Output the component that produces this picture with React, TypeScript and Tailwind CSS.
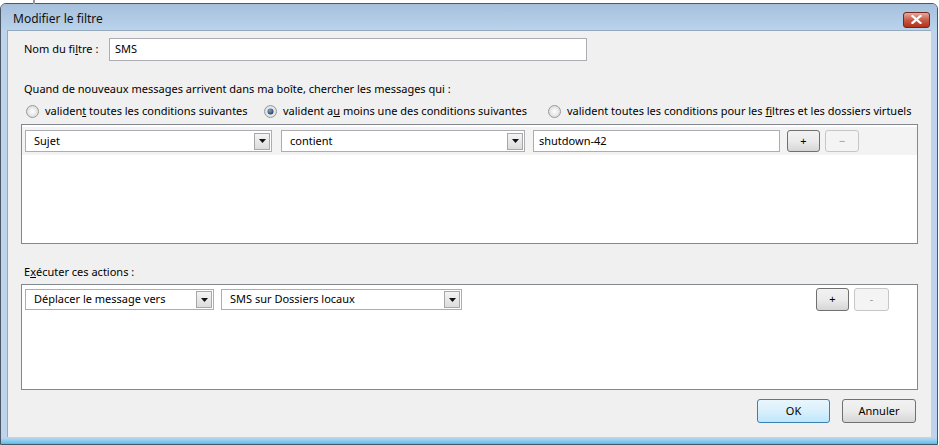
import type { ReactNode } from 'react'

function Combo({ value, className }: { value: string; className: string }) {
  return (
    <div
      className={`${className} flex items-center bg-white border border-[#abadb3] pl-[8px] pr-[1px]`}
    >
      <span className="flex-1 truncate">{value}</span>
      <span className="w-[16px] h-[17px] border border-[#a7a7a7] bg-gradient-to-b from-[#f4f4f4] to-[#dcdcdc] flex items-center justify-center">
        <svg width="7" height="4" viewBox="0 0 7 4">
          <path d="M0 0h7L3.5 4z" fill="#111" />
        </svg>
      </span>
    </div>
  )
}

function SmallBtn({ label, disabled, className }: { label: string; disabled?: boolean; className: string }) {
  return (
    <div
      className={
        disabled
          ? `${className} flex items-center justify-center rounded-[3px] border border-[#c6c6c6] bg-[#f4f4f4] text-[#9a9a9a]`
          : `${className} flex items-center justify-center rounded-[3px] border border-[#707070] bg-gradient-to-b from-[#f2f2f2] via-[#ebebeb] to-[#d6d6d6] text-black`
      }
    >
      {label}
    </div>
  )
}

function Radio({ checked, children, className }: { checked?: boolean; children: ReactNode; className?: string }) {
  return (
    <div className={`${className ?? ''} shrink-0 flex items-center gap-[6px] whitespace-nowrap`}>
      <svg width="13" height="13" viewBox="0 0 13 13" className="shrink-0">
        <defs>
          <radialGradient id="rb" cx="0.5" cy="0.5" r="0.6">
            <stop offset="0" stopColor="#ffffff" />
            <stop offset="1" stopColor="#d4d4d4" />
          </radialGradient>
          <radialGradient id="rd" cx="0.4" cy="0.35" r="0.7">
            <stop offset="0" stopColor="#7fa4c8" />
            <stop offset="1" stopColor="#1d3c5e" />
          </radialGradient>
        </defs>
        <circle cx="6.5" cy="6.5" r="6" fill="url(#rb)" stroke="#9a9a9a" />
        {checked ? <circle cx="6.5" cy="6.5" r="3" fill="url(#rd)" /> : null}
      </svg>
      <span>{children}</span>
    </div>
  )
}

export default function App() {
  return (
    <div className="w-[939px] h-[445px] bg-white overflow-hidden relative font-['Noto_Sans',sans-serif] text-[11px] text-black">
      {/* bit of the window behind */}
      <div className="absolute left-[33px] top-0 w-[2px] h-[4px] bg-[#9a9a9a]" />
      <div className="mt-[3px] w-[938px] h-[442px] flex flex-col rounded-t-[6px] border border-[#4a5866] bg-[#bdd4ec]">
        {/* title bar */}
        <div className="h-[26px] flex items-center justify-between pl-[12px] pr-[7px] rounded-t-[5px] bg-gradient-to-b from-[#a6c0dc] to-[#bad3ec]">
          <span className="mt-[3px] text-[12px] text-[#111]">Modifier le filtre</span>
          <div className="mt-[5px] w-[27px] h-[16px] rounded-[3px] border border-[#6b2a22] bg-gradient-to-b from-[#e9a99c] via-[#c75a47] to-[#b3301b] flex items-center justify-center">
            <svg width="11" height="9" viewBox="0 0 11 9">
              <path d="M1.5 1l8 7M9.5 1l-8 7" stroke="#fff" strokeWidth="2.2" strokeLinecap="square" />
            </svg>
          </div>
        </div>

        <div className="flex-1 flex px-[6px]">
          <div className="flex-1 h-[407px] bg-[#f0f0f0] border-l border-t border-[#97aabd] flex flex-col px-[13px]">
            {/* name row */}
            <div className="mt-[7px] flex items-center">
              <span className="ml-[3px] w-[85px]">
                Nom du fi<span className="underline">l</span>tre :
              </span>
              <div className="w-[478px] h-[23px] bg-white border border-[#abadb3] flex items-center pl-[5px]">SMS</div>
            </div>

            <div className="mt-[20px] ml-[3px] h-[16px] flex items-center">
              Quand de nouveaux messages arrivent dans ma boîte, chercher les messages qui :
            </div>
            <div className="mt-[6px] ml-[5px] h-[16px] flex items-center">
              <Radio className="w-[238px]">
                validen<span className="underline">t</span> toutes les conditions suivantes
              </Radio>
              <Radio checked className="w-[284px]">
                valident a<span className="underline">u</span> moins une des conditions suivantes
              </Radio>
              <Radio>
                valident toutes les conditions pour les <span className="underline">f</span>iltres et les dossiers virtuels
              </Radio>
            </div>

            {/* conditions */}
            <div className="mt-[5px] h-[120px] bg-white border border-[#828790]">
              <div className="mt-[2px] h-[28px] bg-[#f3f3f3] flex items-center pl-[3px]">
                <Combo value="Sujet" className="w-[247px] h-[22px]" />
                <Combo value="contient" className="ml-[9px] w-[244px] h-[22px]" />
                <div className="ml-[8px] w-[247px] h-[22px] bg-white border border-[#abadb3] flex items-center pl-[5px]">
                  shutdown-42
                </div>
                <SmallBtn label="+" className="ml-[7px] w-[33px] h-[22px]" />
                <SmallBtn label="−" disabled className="ml-[5px] w-[34px] h-[22px]" />
              </div>
            </div>

            <div className="mt-[20px] ml-[3px] h-[16px] flex items-center">
              E<span className="underline">x</span>écuter ces actions :
            </div>

            {/* actions */}
            <div className="mt-[4px] h-[106px] bg-white border border-[#828790]">
              <div className="mt-[3px] flex items-center pl-[3px] pr-[28px]">
                <Combo value="Déplacer le message vers" className="w-[189px] h-[21px]" />
                <Combo value="SMS sur Dossiers locaux" className="ml-[7px] w-[241px] h-[21px]" />
                <SmallBtn label="+" className="ml-auto w-[33px] h-[23px]" />
                <SmallBtn label="-" disabled className="ml-[5px] w-[35px] h-[23px]" />
              </div>
            </div>

            <div className="mt-[9px] mr-[2px] flex justify-end gap-[12px]">
              <div className="w-[73px] h-[24px] rounded-[3px] border border-[#3c7fb1] bg-gradient-to-b from-[#eaf6fd] via-[#d9f0fc] to-[#bee6fd] flex items-center justify-center">
                OK
              </div>
              <div className="w-[74px] h-[24px] rounded-[3px] border border-[#707070] bg-gradient-to-b from-[#f2f2f2] via-[#ebebeb] to-[#d6d6d6] flex items-center justify-center">
                Annuler
              </div>
            </div>
          </div>
        </div>
        <div className="h-[6px] bg-gradient-to-b from-[#bdd4ec] to-[#43c2ee]" />
      </div>
    </div>
  )
}
